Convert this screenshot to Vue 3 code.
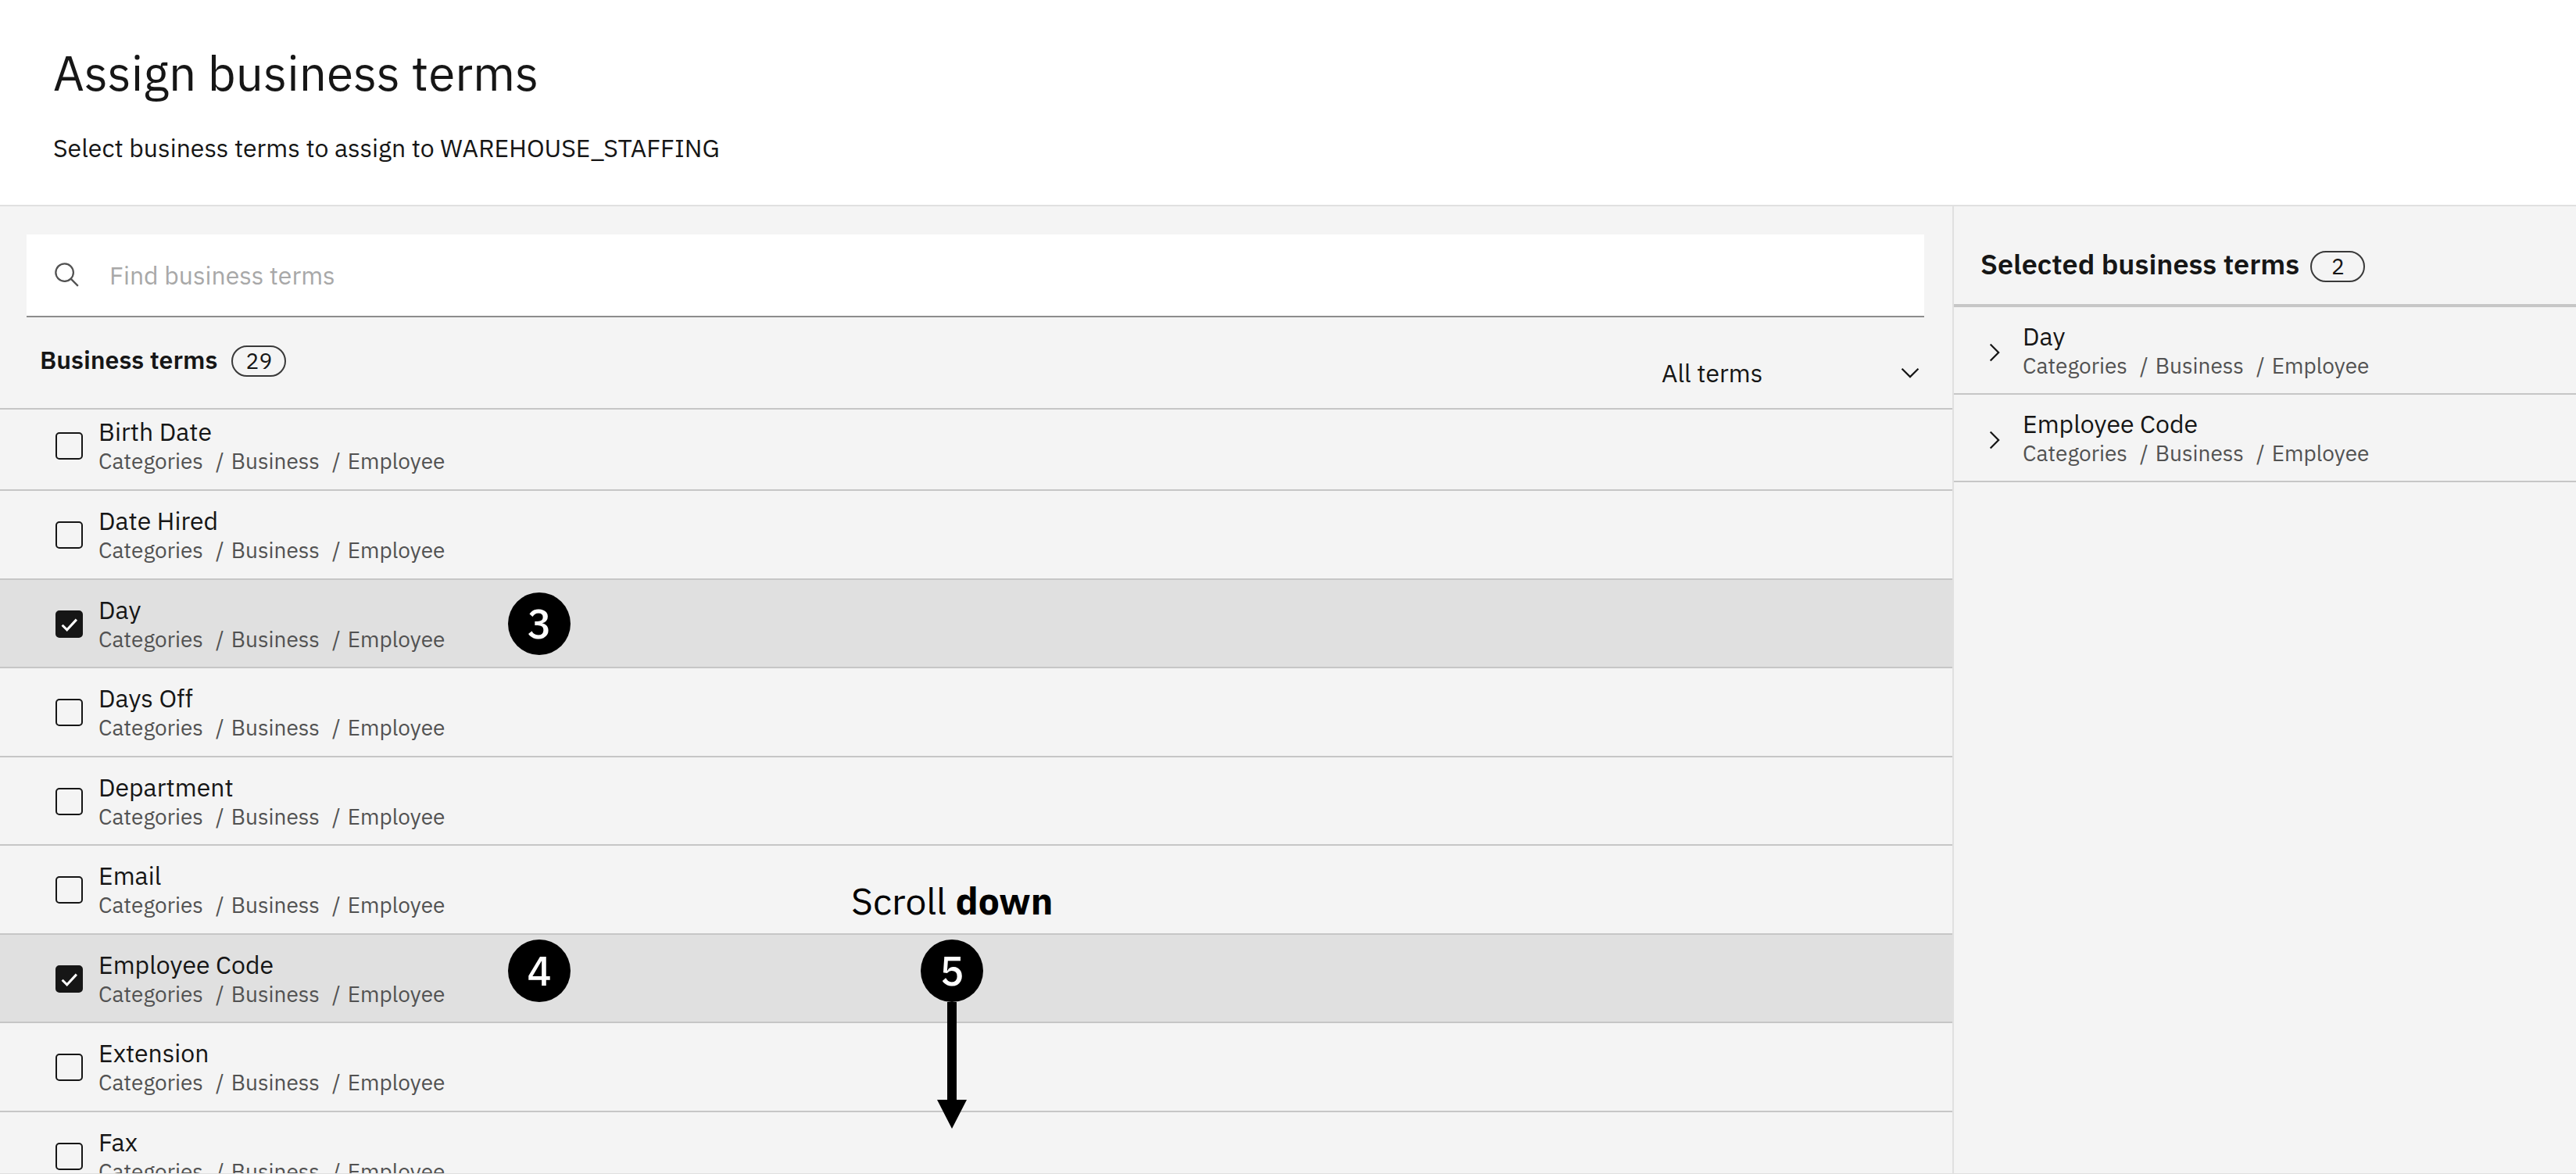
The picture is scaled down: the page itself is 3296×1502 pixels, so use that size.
<script setup>
import { computed, ref } from 'vue'

const path = ['Categories', 'Business', 'Employee']

const terms = ref([
  { name: 'Birth Date', checked: false },
  { name: 'Date Hired', checked: false },
  { name: 'Day', checked: true },
  { name: 'Days Off', checked: false },
  { name: 'Department', checked: false },
  { name: 'Email', checked: false },
  { name: 'Employee Code', checked: true },
  { name: 'Extension', checked: false },
  { name: 'Fax', checked: false },
])

const selected = computed(() => terms.value.filter((term) => term.checked))
const total = 29
</script>

<template>
  <div class="page">
    <header class="header">
      <h1>Assign business terms</h1>
      <p>Select business terms to assign to WAREHOUSE_STAFFING</p>
    </header>

    <div class="body">
      <main class="browse">
        <label class="search">
          <svg class="icon" viewBox="0 0 32 32" aria-hidden="true">
            <path d="M29 27.586l-7.552-7.552a11.018 11.018 0 1 0-1.414 1.414L27.586 29ZM4 13a9 9 0 1 1 9 9 9.01 9.01 0 0 1-9-9Z" />
          </svg>
          <input type="text" placeholder="Find business terms" aria-label="Find business terms" />
        </label>

        <div class="toolbar">
          <div class="heading">
            <h2>Business terms</h2>
            <span class="tag">{{ total }}</span>
          </div>
          <div class="filter">
            <select aria-label="Filter terms">
              <option>All terms</option>
            </select>
            <svg class="icon" viewBox="0 0 16 16" aria-hidden="true">
              <path d="M8 11 3 6 3.7 5.3 8 9.6 12.3 5.3 13 6Z" />
            </svg>
          </div>
        </div>

        <ul class="terms">
          <li v-for="term in terms" :key="term.name" :class="{ checked: term.checked }">
            <label class="term">
              <input v-model="term.checked" type="checkbox" />
              <span class="text">
                <span class="name">{{ term.name }}</span>
                <span class="crumbs"><span v-for="part in path" :key="part">{{ part }}</span></span>
              </span>
            </label>
          </li>
        </ul>

        <span class="step step-3">3</span>
        <span class="step step-4">4</span>
        <div class="scroll-hint">
          <span class="hint-text">Scroll <b>down</b></span>
          <span class="step">5</span>
          <svg class="arrow" viewBox="0 0 38 162" aria-hidden="true">
            <path d="M13 0h12v125h13L19 162 0 125h13Z" />
          </svg>
        </div>
      </main>

      <aside class="selection">
        <div class="heading">
          <h2>Selected business terms</h2>
          <span class="tag">{{ selected.length }}</span>
        </div>
        <ul>
          <li v-for="term in selected" :key="term.name">
            <button type="button" :aria-label="'Expand ' + term.name">
              <svg class="icon" viewBox="0 0 16 16" aria-hidden="true">
                <path d="M11 8 6 13 5.3 12.3 9.6 8 5.3 3.7 6 3Z" />
              </svg>
            </button>
            <span class="text">
              <span class="name">{{ term.name }}</span>
              <span class="crumbs"><span v-for="part in path" :key="part">{{ part }}</span></span>
            </span>
          </li>
        </ul>
      </aside>
    </div>
  </div>
</template>

<style>
body {
  margin: 0;
  background: #f4f4f4;
}
</style>

<style scoped>
.page,
.page * {
  box-sizing: border-box;
}

.page {
  display: flex;
  flex-direction: column;
  height: 100vh;
  border-bottom: 1px solid #e0e0e0;
  color: #161616;
  font-family: "IBM Plex Sans", Roboto, sans-serif;
  font-size: 32px;
  line-height: 40px;
}

h1,
h2,
p,
ul {
  margin: 0;
  padding: 0;
}

ul {
  list-style: none;
}

input,
select,
button {
  margin: 0;
  padding: 0;
  border: 0;
  background: none;
  color: inherit;
  font: inherit;
}

.icon {
  display: block;
  width: 36px;
  height: 36px;
  flex: none;
}

.header {
  display: flex;
  flex-direction: column;
  gap: 36px;
  padding: 53px 68px;
  border-bottom: 2px solid #e0e0e0;
  background: #fff;
}

h1 {
  font-size: 62px;
  font-weight: 400;
  line-height: 80px;
}

.body {
  display: flex;
  flex: 1;
  min-height: 0;
}

.browse {
  position: relative;
  display: flex;
  flex: 1;
  flex-direction: column;
  min-width: 0;
  overflow: hidden;
}

.search {
  display: flex;
  flex: none;
  align-items: center;
  gap: 36px;
  height: 106px;
  margin: 36px 36px 0 34px;
  padding: 0 34px;
  border-bottom: 2px solid #8d8d8d;
  background: #fff;
  fill: #525252;
}

.search input {
  flex: 1;
  height: 80px;
  outline: 0;
}

.search input::placeholder {
  color: #a8a8a8;
  opacity: 1;
}

.heading {
  display: flex;
  align-items: baseline;
  gap: 18px;
}

h2 {
  font-size: 32px;
  font-weight: 600;
  line-height: 40px;
}

.tag {
  min-width: 70px;
  border: 2px solid #393939;
  border-radius: 20px;
  font-size: 28px;
  line-height: 36px;
  text-align: center;
}

.toolbar {
  display: flex;
  flex: none;
  align-items: flex-start;
  justify-content: space-between;
  padding: 34px 36px 8px 51px;
  border-bottom: 2px solid #c6c6c6;
}

.filter {
  position: relative;
}

.filter select {
  width: 336px;
  height: 74px;
  appearance: none;
}

.filter .icon {
  position: absolute;
  top: 19px;
  right: 0;
  fill: #161616;
  pointer-events: none;
}

.terms {
  flex: 1;
  min-height: 0;
  overflow: hidden;
}

.terms li {
  padding: 18px 0 17px 71px;
  border-bottom: 2px solid #c6c6c6;
}

.terms li:nth-child(even),
.terms li:first-child {
  padding-bottom: 18px;
}

.terms li:first-child {
  padding-top: 8px;
}

.terms li.checked {
  background: #e0e0e0;
}

.term {
  display: flex;
  align-items: center;
  gap: 20px;
}

.term input {
  width: 35px;
  height: 35px;
  border: 2px solid #161616;
  border-radius: 5px;
  appearance: none;
}

.term input:checked {
  background: #161616 url("data:image/svg+xml,%3Csvg xmlns='http://www.w3.org/2000/svg' viewBox='0 0 32 32'%3E%3Cpath d='M7 17l6 6L25 10' fill='none' stroke='white' stroke-width='3'/%3E%3C/svg%3E") center / 32px 32px no-repeat;
}

.text {
  display: flex;
  flex-direction: column;
}

.crumbs {
  display: flex;
  color: #525252;
  font-size: 28px;
  line-height: 36px;
}

.crumbs span + span::before {
  content: "/";
  margin: 0 9px 0 16px;
}

.selection {
  flex: 0 0 798px;
  border-left: 2px solid #e0e0e0;
}

.selection .heading {
  gap: 14px;
  padding: 50px 34px 27px;
  border-bottom: 4px solid #c6c6c6;
}

.selection h2 {
  font-size: 36px;
  line-height: 48px;
}

.selection li {
  display: flex;
  align-items: flex-start;
  gap: 18px;
  padding: 17px 34px;
  border-bottom: 2px solid #c6c6c6;
}

.selection button {
  padding: 23px 0 17px;
  fill: #161616;
}

.step {
  display: flex;
  align-items: center;
  justify-content: center;
  width: 80px;
  height: 80px;
  border-radius: 50%;
  background: #000;
  color: #fff;
  font-size: 52px;
  font-weight: 500;
}

.step-3,
.step-4,
.scroll-hint {
  position: absolute;
}

.step-3 {
  top: 494px;
  left: 650px;
}

.step-4 {
  top: 938px;
  left: 650px;
}

.scroll-hint {
  top: 856px;
  left: 1089px;
  display: flex;
  flex-direction: column;
  align-items: center;
  color: #000;
}

.hint-text {
  margin-bottom: 18px;
  font-size: 48px;
  line-height: 64px;
}

.arrow {
  display: block;
  width: 38px;
  height: 162px;
}
</style>
